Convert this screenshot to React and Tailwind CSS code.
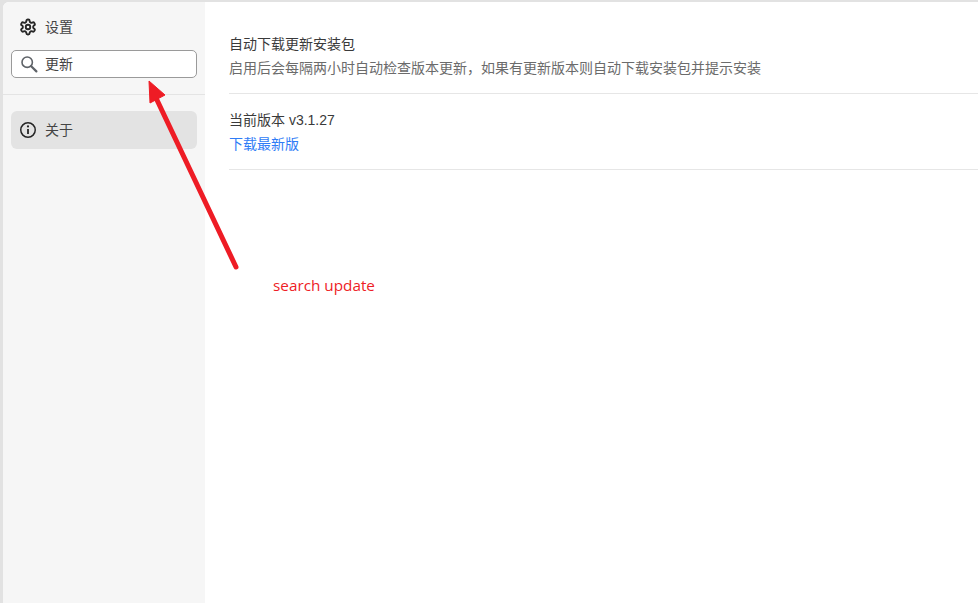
import React from "react";

const Settings = () => (
  <svg width="18" height="18" viewBox="0 0 24 24" fill="none" stroke="#262626" strokeWidth="2.5" strokeLinecap="round" strokeLinejoin="round">
    <path d="M12.22 2h-.44a2 2 0 0 0-2 2v.18a2 2 0 0 1-1 1.73l-.43.25a2 2 0 0 1-2 0l-.15-.08a2 2 0 0 0-2.73.73l-.22.38a2 2 0 0 0 .73 2.73l.15.1a2 2 0 0 1 1 1.72v.51a2 2 0 0 1-1 1.74l-.15.09a2 2 0 0 0-.73 2.73l.22.38a2 2 0 0 0 2.73.73l.15-.08a2 2 0 0 1 2 0l.43.25a2 2 0 0 1 1 1.73V20a2 2 0 0 0 2 2h.44a2 2 0 0 0 2-2v-.18a2 2 0 0 1 1-1.73l.43-.25a2 2 0 0 1 2 0l.15.08a2 2 0 0 0 2.73-.73l.22-.39a2 2 0 0 0-.73-2.73l-.15-.08a2 2 0 0 1-1-1.74v-.5a2 2 0 0 1 1-1.74l.15-.09a2 2 0 0 0 .73-2.73l-.22-.38a2 2 0 0 0-2.73-.73l-.15.08a2 2 0 0 1-2 0l-.43-.25a2 2 0 0 1-1-1.73V4a2 2 0 0 0-2-2z" />
    <circle cx="12" cy="12" r="3" />
  </svg>
);

const SearchIcon = () => (
  <svg width="18" height="18" viewBox="0 0 18 18" fill="none" stroke="#5f6368" strokeLinecap="round">
    <circle cx="7.2" cy="7.2" r="5.2" strokeWidth="1.6" />
    <path d="M11.2 11.2 L16.4 16.4" strokeWidth="2.2" />
  </svg>
);

const Info = () => (
  <svg width="18" height="18" viewBox="0 0 18 18" fill="none" stroke="#262626">
    <circle cx="9" cy="9" r="7.25" strokeWidth="1.5" />
    <path d="M9 8v5" strokeWidth="1.8" />
    <circle cx="9" cy="5.4" r="1.1" fill="#262626" stroke="none" />
  </svg>
);

const Arrow = () => (
  <svg className="absolute left-0 top-0 pointer-events-none" width="978" height="603" viewBox="0 0 978 603" fill="none">
    <path d="M236 267 L157 100" stroke="#ee1c25" strokeWidth="5" strokeLinecap="round" />
    <path d="M149 81 L165 95 L150 103 Z" fill="#ee1c25" stroke="#ee1c25" strokeWidth="1" strokeLinejoin="round" />
  </svg>
);

export default function App() {
  return (
    <div
      className="relative w-[978px] h-[603px] overflow-hidden bg-[#e2e2e2] pt-[2px] pl-[3px] text-[14px]"
      style={{ fontFamily: '"Liberation Sans", "Noto Sans CJK SC", sans-serif' }}
    >
      <div className="flex h-[601px] bg-white rounded-tl-[6px] overflow-hidden">
        <aside className="w-[202px] bg-[#f6f6f6] flex flex-col">
          <div className="px-2 pb-[16px] border-b border-[#e4e4e4]">
            <div className="flex items-center gap-2 h-[18px] mt-[16px] pl-[8px] text-[#444444]">
              <Settings />
              <span>设置</span>
            </div>
            <div className="flex items-center gap-[7px] h-[28px] mt-[14px] pl-2 bg-white border border-[#9a9a9a] rounded-[5px] text-[#444444]">
              <SearchIcon />
              <span>更新</span>
            </div>
          </div>
          <div className="px-2 pt-[16px]">
            <div className="flex items-center gap-2 h-[38px] pl-2 bg-[#e3e3e3] rounded-[6px] text-[#444444]">
              <Info />
              <span>关于</span>
            </div>
          </div>
        </aside>
        <main className="flex-1 pl-6">
          <div className="pt-[32px] pb-[15px] border-b border-[#e6e6e6]">
            <div className="h-5 leading-5 text-[#3a3a3a]">自动下载更新安装包</div>
            <div className="mt-[4px] h-5 leading-5 text-[#6b6b6b]">
              启用后会每隔两小时自动检查版本更新，如果有更新版本则自动下载安装包并提示安装
            </div>
          </div>
          <div className="pt-[16px] pb-[15px] border-b border-[#e6e6e6]">
            <div className="h-5 leading-5 text-[#3a3a3a]">当前版本 v3.1.27</div>
            <div className="mt-[4px] h-5 leading-5 text-[#2f7cf6]">下载最新版</div>
          </div>
        </main>
      </div>
      <Arrow />
      <div
        className="absolute left-[273px] top-[275px] text-[15.3px] leading-5 text-[#ee1c25]"
        style={{ fontFamily: '"Open Sans", sans-serif' }}
      >
        search update
      </div>
    </div>
  );
}
